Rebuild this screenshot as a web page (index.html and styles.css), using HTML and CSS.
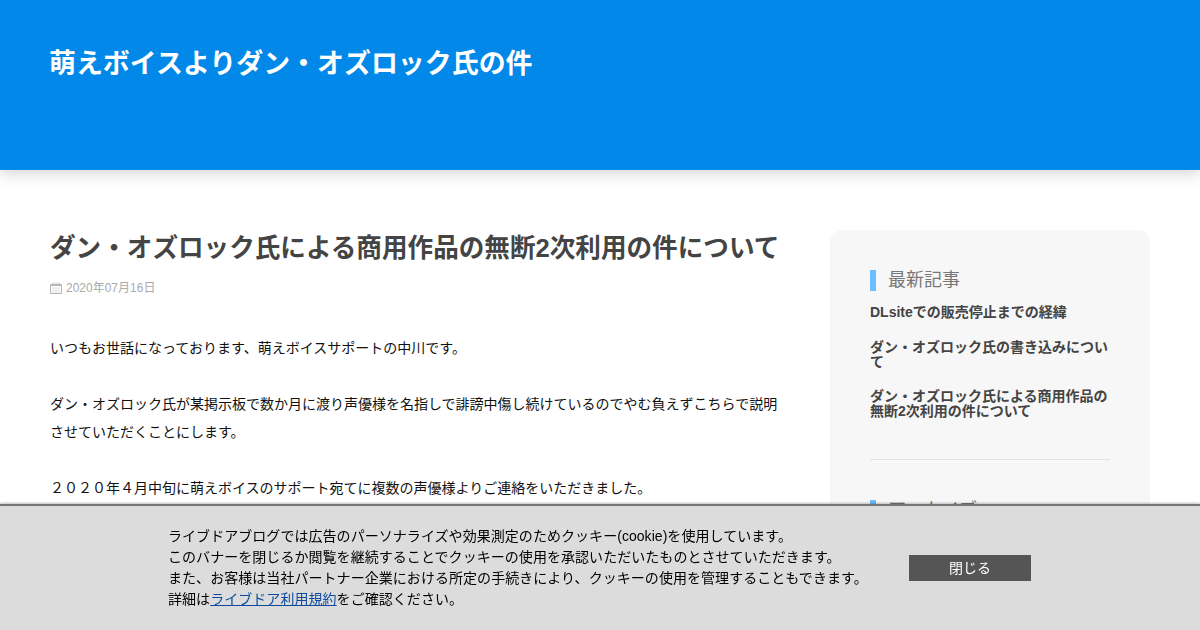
FILE: index.html
```html
<!DOCTYPE html>
<html lang="ja">
<head>
<meta charset="utf-8">
<title>萌えボイスよりダン・オズロック氏の件</title>
<link rel="stylesheet" href="styles.css">
</head>
<body>
<header class="site-header">
  <h1 class="site-title">萌えボイスよりダン・オズロック氏の件</h1>
</header>
<div class="wrap">
  <main class="content">
    <h2 class="post-title">ダン・オズロック氏による商用作品の無断2次利用の件について</h2>
    <div class="post-date">
      <svg class="cal" width="12" height="12" viewBox="0 0 12 12"><path d="M0.5 2.5h11v9h-11z" fill="none" stroke="#b5b5b5"/><path d="M1 2h10v2h-10z" fill="#b5b5b5"/><path d="M3 0.5v2M6 0.5v2M9 0.5v2" stroke="#b5b5b5"/><path d="M2 6h8M2 8h8M2 10h8" stroke="#ddd"/></svg>
      <span>2020年07月16日</span>
    </div>
    <div class="post-body">
      <p>いつもお世話になっております、萌えボイスサポートの中川です。</p>
      <p>ダン・オズロック氏が某掲示板で数か月に渡り声優様を名指しで誹謗中傷し続けているのでやむ負えずこちらで説明させていただくことにします。</p>
      <p>２０２０年４月中旬に萌えボイスのサポート宛てに複数の声優様よりご連絡をいただきました。</p>
    </div>
  </main>
  <aside class="sidebar">
    <section class="widget">
      <h3 class="widget-title">最新記事</h3>
      <ul class="widget-list">
        <li>DLsiteでの販売停止までの経緯</li>
        <li>ダン・オズロック氏の書き込みについて</li>
        <li>ダン・オズロック氏による商用作品の無断2次利用の件について</li>
      </ul>
    </section>
    <section class="widget widget-last">
      <h3 class="widget-title">アーカイブ</h3>
    </section>
  </aside>
</div>
<div class="cookie">
  <div class="cookie-text">
    ライブドアブログでは広告のパーソナライズや効果測定のためクッキー(cookie)を使用しています。<br>
    このバナーを閉じるか閲覧を継続することでクッキーの使用を承認いただいたものとさせていただきます。<br>
    また、お客様は当社パートナー企業における所定の手続きにより、クッキーの使用を管理することもできます。<br>
    詳細は<a href="#">ライブドア利用規約</a>をご確認ください。
  </div>
  <button class="cookie-close">閉じる</button>
</div>
</body>
</html>
```
FILE: styles.css
```css
* { box-sizing: border-box; }
html, body { margin: 0; padding: 0; height: 630px; overflow: hidden; }
body {
  background: #fff;
  color: #111;
  font-family: "Liberation Sans", "Noto Sans CJK JP", sans-serif;
}
.site-header {
  height: 170px;
  background: #0288e8;
  padding: 47px 49px 0;
  box-shadow: 0 2px 16px rgba(0, 0, 0, 0.2);
}
.site-title { margin: 0; color: #fff; font-size: 26.95px; line-height: 34px; font-weight: bold; }
.wrap { display: flex; justify-content: space-between; padding: 60px 50px 0; }
.content { width: 730px; }
.post-title { margin: 0; padding-top: 2px; color: #444; font-size: 25.6px; line-height: 32px; font-weight: bold; white-space: nowrap; }
.post-date { display: flex; align-items: center; gap: 4px; margin-top: 15px; color: #aaa; font-size: 12px; line-height: 18px; }
.post-body { margin-top: 37px; font-size: 14px; line-height: 28px; }
.post-body p { margin: 0 0 28px; }
.sidebar { width: 320px; height: 400px; padding: 40px; background: #f7f7f7; border-radius: 12px; }
.widget { height: 190px; border-bottom: 1px solid #e2e2e2; margin-bottom: 40px; }
.widget-last { height: auto; border-bottom: 0; margin-bottom: 0; }
.widget-title { margin: 0; padding-left: 12px; border-left: 6px solid #6cbfff; color: #777; font-size: 18px; line-height: 21px; font-weight: normal; }
.widget-list { list-style: none; margin: 14px 0 0; padding: 0; color: #444; font-size: 14px; line-height: 15px; font-weight: bold; }
.widget-list li { margin-bottom: 19.5px; }
.cookie {
  position: fixed; left: 0; right: 0; bottom: 0; height: 126px;
  display: flex; align-items: center;
  padding: 0 0 0 168px;
  background: #dcdcdc;
  border-top: 2px solid #777;
  box-shadow: 0 -1px 2px rgba(0, 0, 0, 0.25);
  color: #000;
}
.cookie-text { width: 741px; font-size: 14px; line-height: 21px; white-space: nowrap; letter-spacing: 0.05px; }
.cookie-text a { color: #0d4a9e; }
.cookie-close { width: 122px; height: 26px; padding: 0 0 3px; border: 0; background: #555; color: #fff; font-family: inherit; font-size: 14px; }
```
